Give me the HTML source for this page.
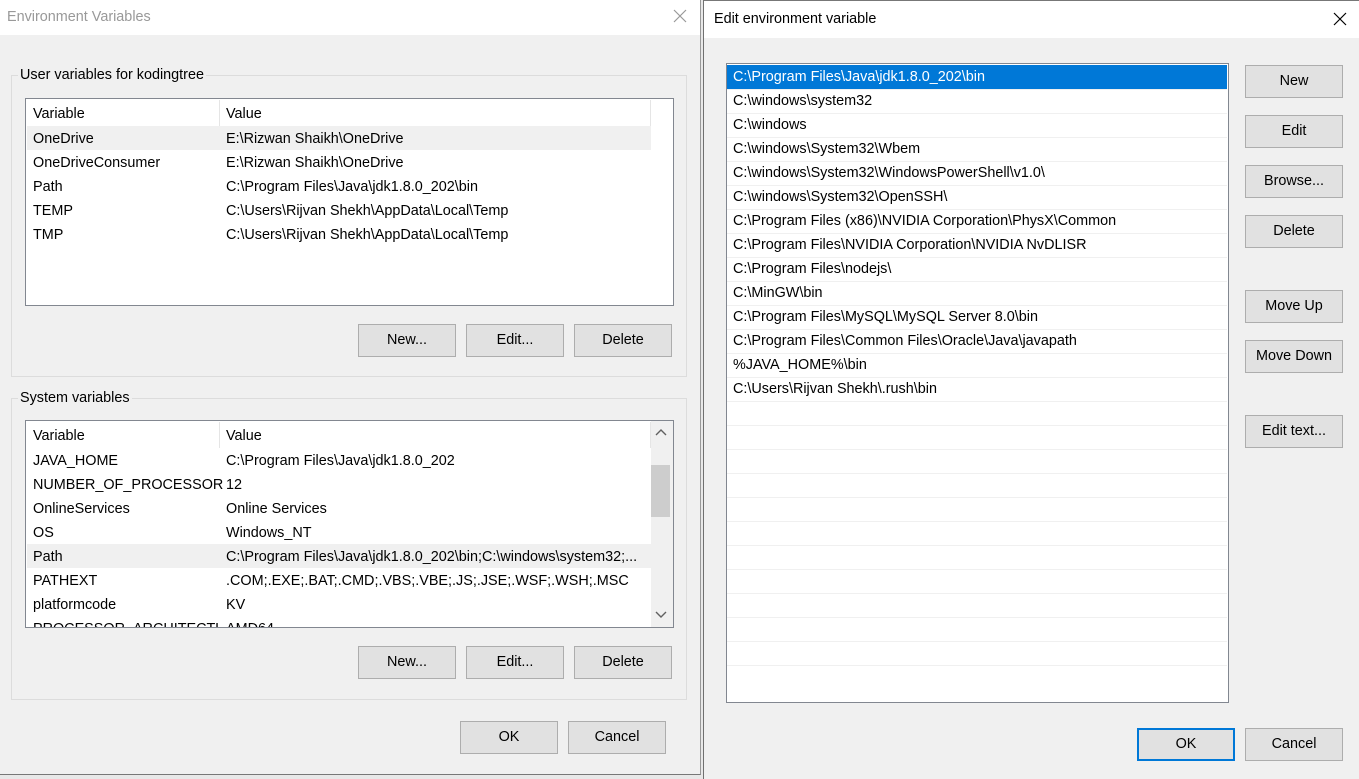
<!DOCTYPE html>
<html><head><meta charset="utf-8"><style>
*{box-sizing:border-box;margin:0;padding:0}
body{width:1359px;height:779px;position:relative;overflow:hidden;background:#e8e8e8;font-family:"Liberation Sans",sans-serif;font-size:14.4px;color:#000}
.a{position:absolute}
.t{position:absolute;white-space:nowrap;line-height:24px}
.v{max-width:190px;overflow:hidden}
.btn{position:absolute;background:#e1e1e1;border:1px solid #adadad;height:33px;width:98px;text-align:center;line-height:31px;font-size:14.4px}
.grp{position:absolute;border:1px solid #dcdcdc}
.leg{position:absolute;background:#f0f0f0;padding:0 2px;line-height:16px;top:-9px;left:6px}
.list{position:absolute;background:#fff;border:1px solid #828790;overflow:hidden}
.r{height:24px;border-top:1px solid #f0f0f0;padding-left:6px;line-height:22px;white-space:nowrap}
</style></head><body>
<div class="a" style="left:0;top:0;width:701px;height:775px;background:#f0f0f0;border-bottom:1px solid #777;border-right:1px solid #999"></div>
<div class="a" style="left:0;top:0;width:700px;height:35px;background:#fff"></div>
<div class="t" style="left:7px;top:5px;color:#999">Environment Variables</div>
<svg class="a" style="left:673px;top:9px" width="14" height="14"><path d="M1 1L13 13M13 1L1 13" stroke="#999" stroke-width="1.2"/></svg>

<div class="grp" style="left:11px;top:75px;width:676px;height:302px"><div class="leg">User variables for kodingtree</div></div>
<div class="list" style="left:25px;top:98px;width:649px;height:208px">
 <div class="a" style="left:193px;top:1px;width:1px;height:26px;background:#e5e5e5"></div>
 <div class="a" style="left:624px;top:1px;width:1px;height:26px;background:#e5e5e5"></div>
 <div class="t" style="left:7px;top:3px">Variable</div><div class="t" style="left:200px;top:3px">Value</div>
 <div class="a" style="left:1px;top:27px;width:624px;height:24px;background:#f0f0f0"></div>
 <div class="t v" style="left:7px;top:28px">OneDrive</div><div class="t" style="left:200px;top:28px">E:\Rizwan Shaikh\OneDrive</div>
 <div class="t v" style="left:7px;top:52px">OneDriveConsumer</div><div class="t" style="left:200px;top:52px">E:\Rizwan Shaikh\OneDrive</div>
 <div class="t v" style="left:7px;top:76px">Path</div><div class="t" style="left:200px;top:76px">C:\Program Files\Java\jdk1.8.0_202\bin</div>
 <div class="t v" style="left:7px;top:100px">TEMP</div><div class="t" style="left:200px;top:100px">C:\Users\Rijvan Shekh\AppData\Local\Temp</div>
 <div class="t v" style="left:7px;top:124px">TMP</div><div class="t" style="left:200px;top:124px">C:\Users\Rijvan Shekh\AppData\Local\Temp</div>
</div>
<div class="btn" style="left:358px;top:324px">New...</div>
<div class="btn" style="left:466px;top:324px">Edit...</div>
<div class="btn" style="left:574px;top:324px">Delete</div>

<div class="grp" style="left:11px;top:398px;width:676px;height:302px"><div class="leg">System variables</div></div>
<div class="list" style="left:25px;top:420px;width:649px;height:208px">
 <div class="a" style="left:193px;top:1px;width:1px;height:26px;background:#e5e5e5"></div>
 <div class="a" style="left:624px;top:1px;width:1px;height:26px;background:#e5e5e5"></div>
 <div class="t" style="left:7px;top:3px">Variable</div><div class="t" style="left:200px;top:3px">Value</div>
 <div class="a" style="left:1px;top:123px;width:624px;height:24px;background:#f0f0f0"></div>
 <div class="t v" style="left:7px;top:28px">JAVA_HOME</div><div class="t" style="left:200px;top:28px">C:\Program Files\Java\jdk1.8.0_202</div>
 <div class="t v" style="left:7px;top:52px">NUMBER_OF_PROCESSORS</div><div class="t" style="left:200px;top:52px">12</div>
 <div class="t v" style="left:7px;top:76px">OnlineServices</div><div class="t" style="left:200px;top:76px">Online Services</div>
 <div class="t v" style="left:7px;top:100px">OS</div><div class="t" style="left:200px;top:100px">Windows_NT</div>
 <div class="t v" style="left:7px;top:124px">Path</div><div class="t" style="left:200px;top:124px">C:\Program Files\Java\jdk1.8.0_202\bin;C:\windows\system32;...</div>
 <div class="t v" style="left:7px;top:148px">PATHEXT</div><div class="t" style="left:200px;top:148px">.COM;.EXE;.BAT;.CMD;.VBS;.VBE;.JS;.JSE;.WSF;.WSH;.MSC</div>
 <div class="t v" style="left:7px;top:172px">platformcode</div><div class="t" style="left:200px;top:172px">KV</div>
 <div class="t v" style="left:7px;top:196px">PROCESSOR_ARCHITECTURE</div><div class="t" style="left:200px;top:196px">AMD64</div>
 <div class="a" style="left:625px;top:0;width:22px;height:206px;background:#f0f0f0"></div>
 <div class="a" style="left:625px;top:44px;width:19px;height:52px;background:#cdcdcd"></div>
 <svg class="a" style="left:629px;top:8px" width="12" height="8"><path d="M1 6L6 1L11 6" stroke="#606060" stroke-width="1.4" fill="none"/></svg>
 <svg class="a" style="left:629px;top:190px" width="12" height="8"><path d="M1 1L6 6L11 1" stroke="#606060" stroke-width="1.4" fill="none"/></svg>
</div>
<div class="btn" style="left:358px;top:646px">New...</div>
<div class="btn" style="left:466px;top:646px">Edit...</div>
<div class="btn" style="left:574px;top:646px">Delete</div>
<div class="btn" style="left:460px;top:721px">OK</div>
<div class="btn" style="left:568px;top:721px">Cancel</div>

<div class="a" style="left:703px;top:0;width:656px;height:779px;background:#f0f0f0;border-left:1px solid #707070;border-top:1px solid #777"></div>
<div class="a" style="left:704px;top:1px;width:655px;height:37px;background:#fff"></div>
<div class="t" style="left:714px;top:7px">Edit environment variable</div>
<svg class="a" style="left:1333px;top:12px" width="14" height="14"><path d="M1 1L13 13M13 1L1 13" stroke="#000" stroke-width="1.2"/></svg>
<div class="list" style="left:726px;top:63px;width:503px;height:640px">
<div style="padding-top:1px">
<div style="height:24px;margin:0 1px 0 0;background:#0078d7;color:#fff;padding-left:6px;line-height:24px">C:\Program Files\Java\jdk1.8.0_202\bin</div>
</div>
</div>
<div class="a" style="left:727px;top:89px;width:500px">
<div class="r">C:\windows\system32</div>
<div class="r">C:\windows</div>
<div class="r">C:\windows\System32\Wbem</div>
<div class="r">C:\windows\System32\WindowsPowerShell\v1.0\</div>
<div class="r">C:\windows\System32\OpenSSH\</div>
<div class="r">C:\Program Files (x86)\NVIDIA Corporation\PhysX\Common</div>
<div class="r">C:\Program Files\NVIDIA Corporation\NVIDIA NvDLISR</div>
<div class="r">C:\Program Files\nodejs\</div>
<div class="r">C:\MinGW\bin</div>
<div class="r">C:\Program Files\MySQL\MySQL Server 8.0\bin</div>
<div class="r">C:\Program Files\Common Files\Oracle\Java\javapath</div>
<div class="r">%JAVA_HOME%\bin</div>
<div class="r">C:\Users\Rijvan Shekh\.rush\bin</div>
<div class="r"></div><div class="r"></div><div class="r"></div><div class="r"></div><div class="r"></div>
<div class="r"></div><div class="r"></div><div class="r"></div><div class="r"></div><div class="r"></div><div class="r"></div>
<div style="height:1px;border-top:1px solid #f0f0f0"></div>
</div>
<div class="btn" style="left:1245px;top:65px">New</div>
<div class="btn" style="left:1245px;top:115px">Edit</div>
<div class="btn" style="left:1245px;top:165px">Browse...</div>
<div class="btn" style="left:1245px;top:215px">Delete</div>
<div class="btn" style="left:1245px;top:290px">Move Up</div>
<div class="btn" style="left:1245px;top:340px">Move Down</div>
<div class="btn" style="left:1245px;top:415px">Edit text...</div>
<div class="btn" style="left:1137px;top:728px;border:2px solid #0078d7;line-height:29px">OK</div>
<div class="btn" style="left:1245px;top:728px">Cancel</div>
</body></html>
